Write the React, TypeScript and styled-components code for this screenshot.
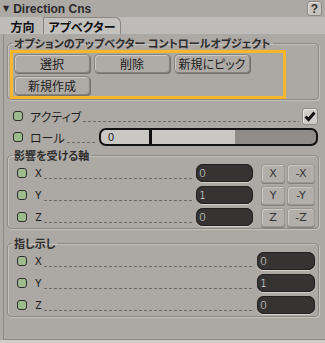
import styled, { createGlobalStyle } from 'styled-components';

const GlobalStyle = createGlobalStyle`
  html, body {
    margin: 0;
    padding: 0;
    background: #aca8a3;
  }
  body {
    font-family: "Noto Sans CJK JP", "Liberation Sans", sans-serif;
  }
`;

const AXES = ['X', 'Y', 'Z'];
const AFFECTED = ['0', '1', '0'];
const POINTING = ['0', '1', '0'];

function Led() {
  return <LedDot />;
}

function App() {
  return (
    <>
      <GlobalStyle />
      <Panel>
        <Header>
          <Arrow>▼</Arrow>
          <Title>Direction Cns</Title>
          <HelpButton>?</HelpButton>
        </Header>

        <TabBar>
          <Tab $width={41}>方向</Tab>
          <Tab $width={78} $active>
            アプベクター
          </Tab>
        </TabBar>

        <Body>
          <Group>
            <Legend>オプションのアップベクター コントロールオブジェクト</Legend>
            <Highlight>
              <ButtonGrid>
                <Button>選択</Button>
                <Button>削除</Button>
                <Button>新規にピック</Button>
                <Button>新規作成</Button>
              </ButtonGrid>
            </Highlight>
          </Group>

          <ParamRow $top={6}>
            <Led />
            <ParamLabel>アクティブ</ParamLabel>
            <Leader />
            <CheckBox>
              <svg width="12" height="11" viewBox="0 0 12 11">
                <path d="M1.5 5.5 L4.5 8.5 L10.5 1.5" fill="none" stroke="#111" strokeWidth="3" />
              </svg>
            </CheckBox>
          </ParamRow>

          <ParamRow $top={1}>
            <Led />
            <ParamLabel>ロール</ParamLabel>
            <Leader />
            <Slider>
              <SliderValue>0</SliderValue>
              <SliderMarker />
            </Slider>
          </ParamRow>

          <Group $top={2}>
            <Legend>影響を受ける軸</Legend>
            {AXES.map((axis, i) => (
              <AxisRow key={axis}>
                <Led />
                <AxisLetter>{axis}</AxisLetter>
                <Leader />
                <NumberField $width={57}>{AFFECTED[i]}</NumberField>
                <AxisButtons>
                  <AxisButton $width={24}>{axis}</AxisButton>
                  <AxisButton $width={28}>-{axis}</AxisButton>
                </AxisButtons>
              </AxisRow>
            ))}
          </Group>

          <Group $top={8}>
            <Legend>指し示し</Legend>
            {AXES.map((axis, i) => (
              <AxisRow key={axis}>
                <Led />
                <AxisLetter>{axis}</AxisLetter>
                <Leader />
                <NumberField $width={58}>{POINTING[i]}</NumberField>
              </AxisRow>
            ))}
          </Group>
        </Body>
        <Footer />
      </Panel>
    </>
  );
}

export default App;

const Panel = styled.div`
  width: 325px;
  height: 343px;
  display: flex;
  flex-direction: column;
  overflow: hidden;
  background: #aca8a3;
  color: #1e1e1e;
  font-feature-settings: 'palt';
`;

const Header = styled.header`
  height: 17px;
  display: flex;
  align-items: center;
  gap: 4px;
  padding: 0 3px 0 3px;
`;

const Arrow = styled.span`
  font-family: 'DejaVu Sans', sans-serif;
  font-size: 8px;
  color: #2a2a2a;
`;

const Title = styled.span`
  font-family: 'Liberation Sans', sans-serif;
  font-size: 12px;
  font-weight: 700;
  color: #2a2a2a;
`;

const HelpButton = styled.span`
  margin-left: auto;
  width: 13px;
  height: 13px;
  display: flex;
  align-items: center;
  justify-content: center;
  border: 1px solid #8a8681;
  border-radius: 3px;
  background: #c8c5c1;
  box-shadow: inset 1px 1px 0 #e2dfdb;
  font-family: 'Liberation Sans', sans-serif;
  font-size: 12px;
  font-weight: 700;
  color: #333;
`;

const TabBar = styled.nav`
  height: 17px;
  display: flex;
  align-items: stretch;
  padding-left: 2px;
  background: #bebcb8;
`;

const Tab = styled.div<{ $width: number; $active?: boolean }>`
  width: ${(p) => p.$width}px;
  box-sizing: border-box;
  display: flex;
  align-items: center;
  justify-content: center;
  font-size: 12px;
  font-weight: 700;
  color: #111;
  border: 1px solid ${(p) => (p.$active ? '#8a8681' : 'transparent')};
  border-bottom: none;
  border-radius: 0 6px 0 0;
  background: ${(p) => (p.$active ? '#c4c2be' : 'transparent')};
`;

const Body = styled.main`
  flex: 1;
  margin-left: 3px;
  padding: 3px 6px 0 3px;
  border-left: 1px solid #8c8883;
  border-bottom: 1px solid #8c8883;
`;

const Footer = styled.footer`
  height: 3px;
  background: #cfccc8;
`;

const Group = styled.fieldset<{ $top?: number }>`
  margin: ${(p) => p.$top ?? 0}px 0 0;
  padding: 0 3px 0 2px;
  min-width: 0;
  border: 1px solid #8c8883;
  border-radius: 4px;
  box-shadow: 1px 1px 0 #c4c0bb, inset 1px 1px 0 #c4c0bb;
`;

const Legend = styled.legend`
  margin-left: 2px;
  padding: 0 2px;
  font-size: 11px;
  font-weight: 700;
  line-height: 13px;
  color: #2e2e2e;
`;

const Highlight = styled.div`
  width: fit-content;
  border: 3px solid #f8b62b;
  padding: 1px 33px 1px 1px;
`;

const ButtonGrid = styled.div`
  display: grid;
  grid-template-columns: repeat(3, 76px);
  column-gap: 4px;
  row-gap: 3px;
`;

const Button = styled.button`
  height: 19px;
  padding: 0;
  border: 1px solid #86827d;
  border-radius: 4px;
  background: #aeaaa5;
  box-shadow: inset 1px 1px 0 #cfcbc6, 1px 1px 0 #75716c;
  font-family: inherit;
  font-size: 12px;
  font-feature-settings: 'palt';
  color: #1c1c1c;
`;

const ParamRow = styled.div<{ $top: number }>`
  height: 20px;
  margin-top: ${(p) => p.$top}px;
  display: flex;
  align-items: center;
  padding: 0 1px 0 6px;
`;

const LedDot = styled.span`
  flex: none;
  width: 8px;
  height: 8px;
  border: 1px solid #2c2c2c;
  border-radius: 3px;
  background: #9dbb8e;
`;

const ParamLabel = styled.span`
  margin-left: 7px;
  font-size: 12px;
  color: #1e1e1e;
`;

const Leader = styled.span`
  flex: 1;
  height: 1px;
  margin: 10px 3px 0 2px;
  background: repeating-linear-gradient(90deg, #6f6c68 0 3px, transparent 3px 5px);
`;

const CheckBox = styled.span`
  width: 14px;
  height: 15px;
  display: flex;
  align-items: center;
  justify-content: center;
  border: 1px solid #8e8a85;
  border-radius: 3px;
  background: #d0cdc9;
  box-shadow: inset 1px 1px 0 #ebe8e4;
`;

const Slider = styled.div`
  position: relative;
  width: 215px;
  height: 14px;
  border: 2px solid #121212;
  border-radius: 7px;
  background: linear-gradient(90deg, #c9c8c5 0 134px, #8f8c89 134px);
  display: flex;
  align-items: center;
`;

const SliderValue = styled.span`
  padding-left: 7px;
  font-family: 'Liberation Sans', sans-serif;
  font-size: 11px;
  color: #1a1a1a;
`;

const SliderMarker = styled.span`
  position: absolute;
  left: 48px;
  top: 0;
  bottom: 0;
  width: 3px;
  background: #111;
`;

const AxisRow = styled.div`
  height: 22px;
  display: flex;
  align-items: center;
  padding-left: 7px;
`;

const AxisLetter = styled.span`
  margin-left: 8px;
  font-family: 'DejaVu Sans Mono', monospace;
  font-size: 11px;
  color: #1e1e1e;
`;

const NumberField = styled.span<{ $width: number }>`
  box-sizing: border-box;
  width: ${(p) => p.$width}px;
  height: 18px;
  padding: 0 0 0 3px;
  display: flex;
  align-items: center;
  border-radius: 7px;
  background: #363432;
  box-shadow: 0 1px 0 #d4d0cb, inset 0 0 0 1px #22211f;
  font-family: 'DejaVu Sans', sans-serif;
  font-size: 11px;
  font-weight: 300;
  color: #f2f2f2;
`;

const AxisButtons = styled.div`
  display: flex;
  gap: 2px;
  margin-left: 8px;
`;

const AxisButton = styled.span<{ $width: number }>`
  box-sizing: border-box;
  width: ${(p) => p.$width}px;
  height: 19px;
  display: flex;
  align-items: center;
  justify-content: center;
  border: 1px solid #9a9691;
  border-radius: 3px;
  background: #b2aea9;
  box-shadow: inset 1px 1px 0 #cbc7c2, 0 1px 0 #84807b;
  font-family: 'DejaVu Sans', sans-serif;
  font-size: 11px;
  color: #333;
`;
